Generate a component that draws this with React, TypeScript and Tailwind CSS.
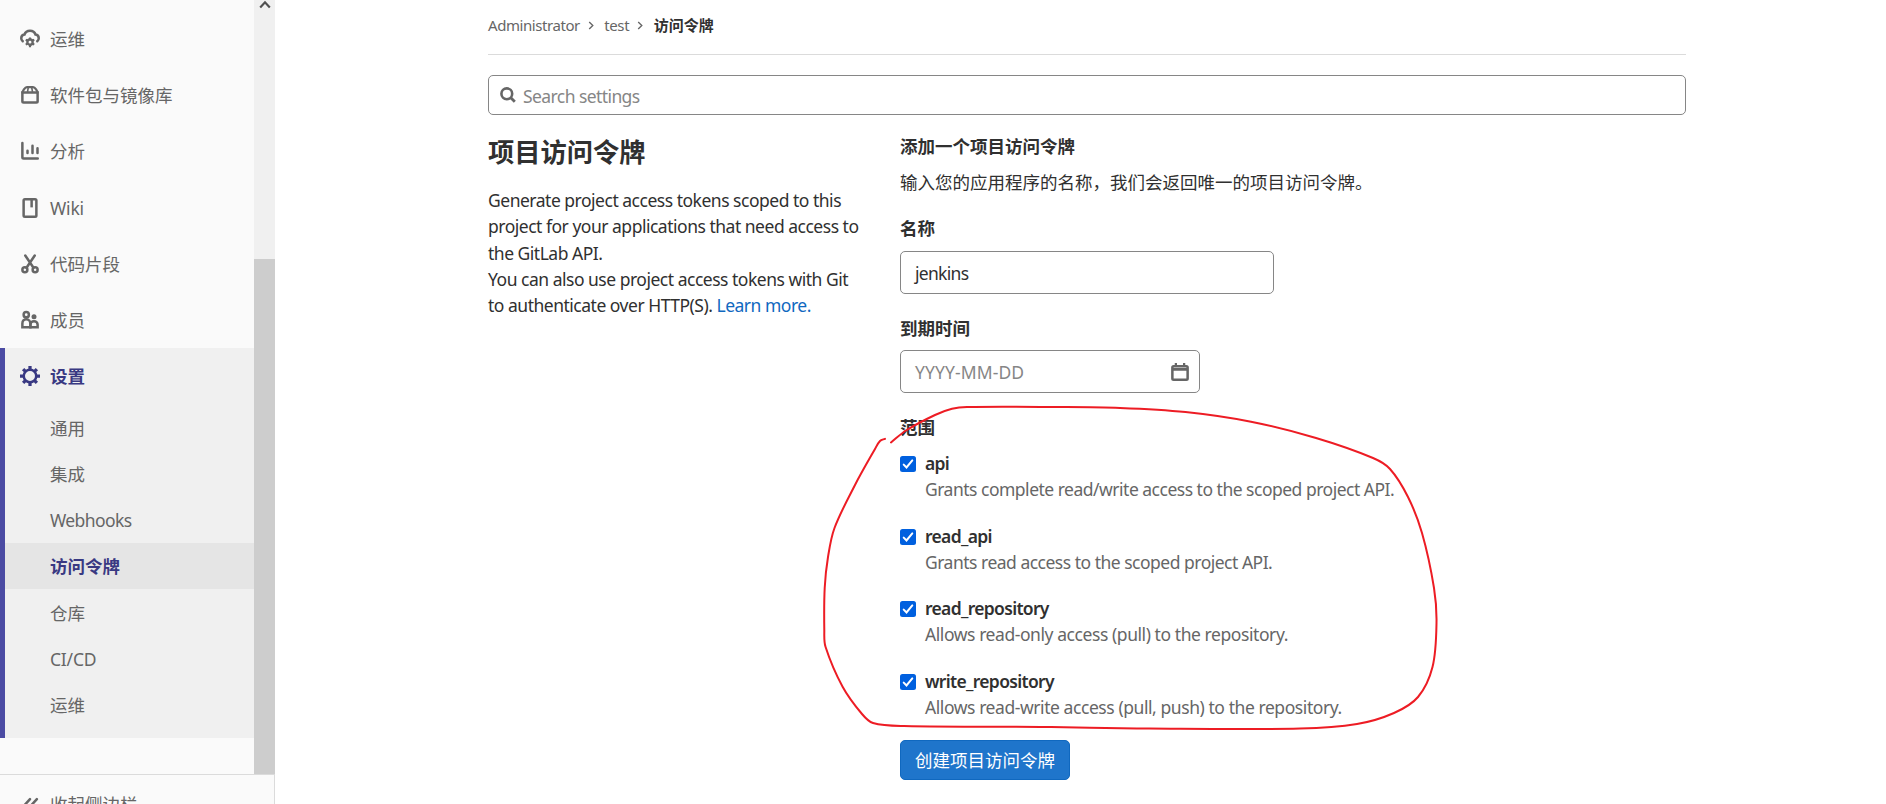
import React from 'react';
import clsx from 'clsx';

type IconProps = { children: React.ReactNode; className?: string };

function Icon({ children, className }: IconProps) {
  return (
    <svg viewBox="0 0 16 16" fill="none" stroke="currentColor" strokeWidth="2" className={clsx('size-5 shrink-0', className)}>
      {children}
    </svg>
  );
}

const CloudGear = () => (
  <Icon>
    <path d="M2.200 9.800C1.500 9.200 1 8.400 1 7.300 1 5.700 2.100 4.600 3.600 4.400 4.200 2.600 5.900 1.400 8 1.400s3.800 1.200 4.400 3C13.900 4.600 15 5.700 15 7.300c0 1.100-.5 1.900-1.200 2.500" strokeLinecap="round" />
    <circle cx="8" cy="10.500" r="2.100" strokeWidth="1.900" />
    <path d="M8 6.700v1.500M8 12.800v1.700M4.600 8.500l1.300.8M10.100 11.700l1.300.8M11.400 8.500l-1.300.8M5.900 11.700l-1.300.8" strokeWidth="1.700" />
  </Icon>
);

const Package = () => (
  <Icon>
    <path d="M1.900 6h12.200v7a1 1 0 0 1-1 1H2.900a1 1 0 0 1-1-1z" />
    <path d="M1.900 6.500C1.900 5 4 1.700 5.500 1.700h5c1.500 0 3.600 3.300 3.600 4.800" strokeWidth="1.800" />
    <path d="M6.700 1.500L6 5.500M9.300 1.500l.7 4" strokeWidth="1.300" />
  </Icon>
);

const Chart = () => (
  <Icon>
    <path d="M1.900 1.500V13c0 .6.400 1 1 1h11.300" strokeLinecap="round" />
    <path d="M6 7.800v1.800M10 3.800v5.800M14 5.800v3.800" strokeLinecap="round" />
  </Icon>
);

const Book = () => (
  <Icon>
    <rect x="2.900" y="1" width="10.200" height="14" rx="1" />
    <path d="M9.300 1v6.500" />
  </Icon>
);

const Scissors = () => (
  <Icon>
    <circle cx="3.900" cy="12.600" r="2" />
    <circle cx="12.100" cy="12.600" r="2" />
    <path d="M4.200 1.200l6.600 9.800M11.800 1.200L5.200 11" strokeLinecap="round" />
  </Icon>
);

const Users = () => (
  <Icon>
    <circle cx="5" cy="3.700" r="2.100" />
    <path d="M1.900 13.800v-3c0-1.900 1.200-3.500 3.100-3.500S8.300 9 8.300 11v2.800z" />
    <circle cx="11.200" cy="5.400" r="2" fill="currentColor" stroke="none" />
    <path d="M8.300 13.800v-2c0-1.600 1.300-2.800 2.900-2.800s2.900 1.200 2.900 2.800v2z" />
  </Icon>
);

const Gear = () => (
  <Icon>
    <circle cx="8" cy="8" r="5" />
    <path
      d="M8 0v3M8 13v3M0 8h3M13 8h3M2.500 2.500l2 2M11.500 11.500l2 2M13.500 2.500l-2 2M4.500 11.500l-2 2"
      strokeWidth="2.600"
    />
  </Icon>
);

const navItems = [
  { label: '运维', icon: <CloudGear /> },
  { label: '软件包与镜像库', icon: <Package /> },
  { label: '分析', icon: <Chart /> },
  { label: 'Wiki', icon: <Book /> },
  { label: '代码片段', icon: <Scissors /> },
  { label: '成员', icon: <Users /> },
];

const subItems = ['通用', '集成', 'Webhooks', '访问令牌', '仓库', 'CI/CD', '运维'];

const scopes = [
  { name: 'api', text: 'Grants complete read/write access to the scoped project API.' },
  { name: 'read_api', text: 'Grants read access to the scoped project API.' },
  { name: 'read_repository', text: 'Allows read-only access (pull) to the repository.' },
  { name: 'write_repository', text: 'Allows read-write access (pull, push) to the repository.' },
];

const markPoints: [number, number][] = [
  [891, 442.500], [906, 430.500], [935, 415], [952, 408.800], [967, 407], [1055, 407], [1120, 407.900], [1185.500, 412],
  [1251, 421.700], [1316, 438], [1373, 458], [1390, 469], [1408, 497], [1422, 533], [1434, 588],
  [1436.500, 623], [1432.500, 667], [1418, 697], [1394, 713], [1357, 724], [1300, 728.500], [1149, 728.500],
  [1047, 727], [904, 726], [873, 723], [862, 714], [842.600, 686.700], [825.500, 646.700], [824.300, 630],
  [824.700, 588], [828, 557], [834.500, 528], [855, 485], [875, 449], [880, 441], [885, 438.800],
];

function smoothPath(points: [number, number][]) {
  let d = `M${points[0][0]} ${points[0][1]}`;
  for (let i = 0; i < points.length - 1; i++) {
    const p0 = points[i - 1] ?? points[i];
    const p1 = points[i];
    const p2 = points[i + 1];
    const p3 = points[i + 2] ?? p2;
    const len = Math.hypot(p2[0] - p1[0], p2[1] - p1[1]);
    const t1 = len / (Math.hypot(p2[0] - p0[0], p2[1] - p0[1]) * 3);
    const t2 = len / (Math.hypot(p3[0] - p1[0], p3[1] - p1[1]) * 3);
    d += `C${p1[0] + (p2[0] - p0[0]) * t1} ${p1[1] + (p2[1] - p0[1]) * t1} ${p2[0] - (p3[0] - p1[0]) * t2} ${p2[1] - (p3[1] - p1[1]) * t2} ${p2[0]} ${p2[1]}`;
  }
  return d;
}

function Sidebar() {
  return (
    <aside className="flex h-full w-[275px] shrink-0 flex-col bg-[#fafafa] text-[#666]">
      <div className="flex h-[774px]">
        <nav className="w-[254px] pt-[11px]">
          {navItems.map((item) => (
            <a key={item.label} className="flex h-[56.200px] items-center gap-2.5 pl-5">
              {item.icon}
              <span className={clsx(item.label === 'Wiki' && 'tracking-[-0.200px]')}>{item.label}</span>
            </a>
          ))}
          <div className="h-[390px] border-l-[5px] border-[#4b4ba3] bg-[#f0f0f0]">
            <a className="flex h-[56.200px] items-center gap-2.5 pl-[15px] font-bold text-[#393982]">
              <Gear />
              <span>设置</span>
            </a>
            {subItems.map((label) => (
              <a
                key={label}
                className={clsx(
                  'flex h-[46.200px] items-center pt-px pl-[45px]',
                  label === '访问令牌' && 'bg-[#e5e5e5] font-bold text-[#393982]',
                  label === 'Webhooks' && 'tracking-[-0.600px]',
                  label === 'CI/CD' && 'tracking-[-0.200px]',
                )}
              >
                {label}
              </a>
            ))}
          </div>
        </nav>
        <div className="flex w-[21px] flex-col bg-[#f0f0f0]">
          <div className="flex h-[259px] justify-center">
            <svg viewBox="0 0 12 9" className="h-[9px] w-3" fill="none" stroke="#505050" strokeWidth="2.200">
              <path d="M1.200 7.500L6 2.300l4.800 5.200" />
            </svg>
          </div>
          <div className="flex-1 bg-[#cdcdcd]" />
        </div>
      </div>
      <div className="flex h-[30px] items-start gap-2.5 overflow-hidden border-t border-r border-[#dbdbdb] pt-4 pl-5">
        <Icon className="mt-[5px]">
          <path d="M8 2.500L3 8l5 5.500M13.500 2.500L8.500 8l5 5.500" strokeLinecap="round" />
        </Icon>
        <span>收起侧边栏</span>
      </div>
    </aside>
  );
}

function Crumb() {
  return (
    <svg viewBox="0 0 6 10" className="mr-[10.500px] ml-[8px] h-[9px] w-[6px]" fill="none" stroke="#666" strokeWidth="1.500">
      <path d="M1 1l4 4-4 4" />
    </svg>
  );
}

export default function App() {
  return (
    <div className="relative flex h-[804px] w-[1886px] overflow-hidden bg-white font-['Noto_Sans','Noto_Sans_CJK_SC',sans-serif] text-[17.500px] leading-[26.250px] text-[#303030]">
      <Sidebar />
      <main className="ml-[213px] w-[1198px]">
        <nav className="flex h-[55px] items-center border-b border-[#dbdbdb] pb-1 text-[15px] text-[#666]">
          <span className="tracking-[-0.430px]">Administrator</span>
          <Crumb />
          <span className="tracking-[-0.430px]">test</span>
          <Crumb />
          <span className="font-bold text-[#303030]">访问令牌</span>
        </nav>
        <div className="mt-5 flex h-10 items-center rounded-[5px] border border-[#868686] pl-[11px]">
          <svg viewBox="0 0 16 16" className="mb-px size-4" fill="none" stroke="#666" strokeWidth="2.600">
            <circle cx="6.800" cy="6.800" r="5.400" />
            <path d="M10.800 10.800l4 4" strokeWidth="2.800" />
          </svg>
          <span className="mt-[3px] ml-[7px] tracking-[-0.580px] text-[#868686]">Search settings</span>
        </div>
        <div className="flex">
          <section className="w-[412px] shrink-0 pt-[19px]">
            <h4 className="text-[26.250px] leading-[36px] font-bold">项目访问令牌</h4>
            <p className="mt-[17px] tracking-[-0.490px] whitespace-nowrap">
              Generate project access tokens scoped to this
              <br />
              project for your applications that need access to
              <br />
              the GitLab API.
              <br />
              You can also use project access tokens with Git
              <br />
              to authenticate over HTTP(S). <a className="text-[#1068bf]">Learn more.</a>
            </p>
          </section>
          <section className="w-[560px] pt-[18px]">
            <h5 className="font-bold">添加一个项目访问令牌</h5>
            <p className="mt-[10px] whitespace-nowrap">输入您的应用程序的名称，我们会返回唯一的项目访问令牌。</p>
            <div className="mt-[19px] font-bold">名称</div>
            <div className="mt-[10px] flex h-[43px] w-[374px] items-center rounded-[5px] border border-[#868686] pt-[2px] pl-[14px]">
              <span className="tracking-[-0.700px]">jenkins</span>
            </div>
            <div className="mt-[21px] font-bold">到期时间</div>
            <div className="mt-[9px] flex h-[43px] w-[300px] items-center justify-between rounded-[5px] border border-[#868686] pr-[9px] pl-[14px]">
              <span className="mt-px tracking-[0.100px] text-[#868686]">YYYY-MM-DD</span>
              <Icon className="text-[#666]">
                <rect x="1.900" y="3.400" width="12.200" height="10.800" rx="1" />
                <path d="M2 5.900h12" strokeWidth="2.200" />
                <path d="M4.700 .8v2.500M11.300 .8v2.500" strokeWidth="1.800" />
              </Icon>
            </div>
            <div className="mt-[21px] font-bold">范围</div>
            <div className="mt-[10px]">
              {scopes.map((scope) => (
                <div key={scope.name} className="flex h-[72.500px] gap-[9px]">
                  <svg viewBox="0 0 16 16" className="mt-[6px] size-4 shrink-0">
                    <rect width="16" height="16" rx="2.500" fill="#0060df" />
                    <path d="M3.700 8.600l2.800 2.800 5.800-7" fill="none" stroke="#fff" strokeWidth="2" strokeLinecap="round" />
                  </svg>
                  <div className="whitespace-nowrap">
                    <div className="font-semibold tracking-[-0.680px]">{scope.name}</div>
                    <div className={clsx('-mt-[0.400px] text-[#666]', scope.text.startsWith('Allows') ? 'tracking-[-0.430px]' : 'tracking-[-0.500px]')}>
                      {scope.text}
                    </div>
                  </div>
                </div>
              ))}
            </div>
            <button className="flex h-10 w-[170px] items-center justify-center rounded-[5px] border border-[#1068bf] bg-[#1f75cb] text-white">
              创建项目访问令牌
            </button>
          </section>
        </div>
      </main>
      <svg viewBox="0 0 1886 804" className="pointer-events-none absolute inset-0 h-full w-full">
        <path d={smoothPath(markPoints)} fill="none" stroke="#ed1c24" strokeWidth="2" strokeLinecap="round" />
      </svg>
    </div>
  );
}
